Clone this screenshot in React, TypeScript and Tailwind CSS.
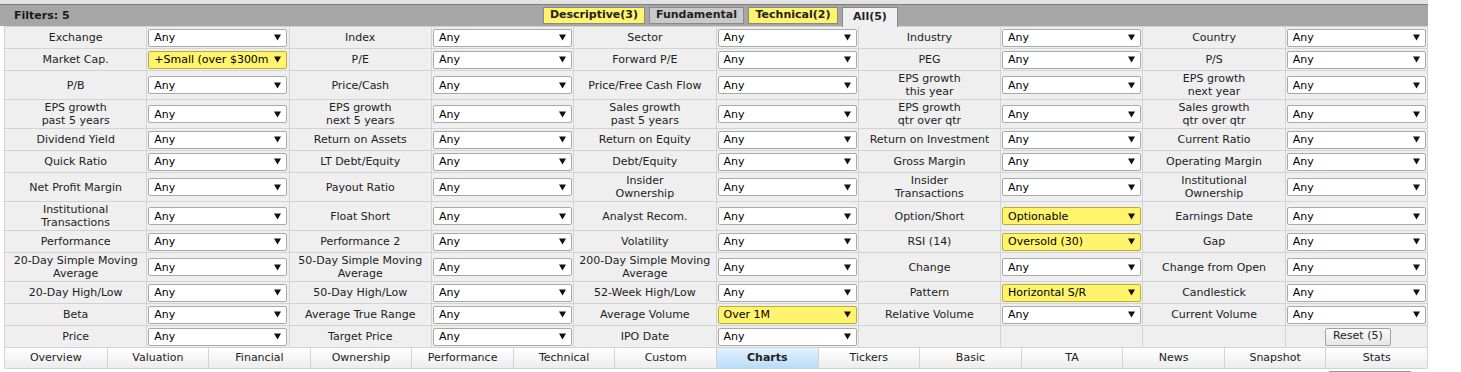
import React from 'react';

type Filter = { label: string[]; value?: string; hot?: boolean };

const rows: Filter[][] = [
  [{ label: ['Exchange'] }, { label: ['Index'] }, { label: ['Sector'] }, { label: ['Industry'] }, { label: ['Country'] }],
  [
    { label: ['Market Cap.'], value: '+Small (over $300m', hot: true },
    { label: ['P/E'] },
    { label: ['Forward P/E'] },
    { label: ['PEG'] },
    { label: ['P/S'] },
  ],
  [
    { label: ['P/B'] },
    { label: ['Price/Cash'] },
    { label: ['Price/Free Cash Flow'] },
    { label: ['EPS growth', 'this year'] },
    { label: ['EPS growth', 'next year'] },
  ],
  [
    { label: ['EPS growth', 'past 5 years'] },
    { label: ['EPS growth', 'next 5 years'] },
    { label: ['Sales growth', 'past 5 years'] },
    { label: ['EPS growth', 'qtr over qtr'] },
    { label: ['Sales growth', 'qtr over qtr'] },
  ],
  [
    { label: ['Dividend Yield'] },
    { label: ['Return on Assets'] },
    { label: ['Return on Equity'] },
    { label: ['Return on Investment'] },
    { label: ['Current Ratio'] },
  ],
  [
    { label: ['Quick Ratio'] },
    { label: ['LT Debt/Equity'] },
    { label: ['Debt/Equity'] },
    { label: ['Gross Margin'] },
    { label: ['Operating Margin'] },
  ],
  [
    { label: ['Net Profit Margin'] },
    { label: ['Payout Ratio'] },
    { label: ['Insider', 'Ownership'] },
    { label: ['Insider', 'Transactions'] },
    { label: ['Institutional', 'Ownership'] },
  ],
  [
    { label: ['Institutional', 'Transactions'] },
    { label: ['Float Short'] },
    { label: ['Analyst Recom.'] },
    { label: ['Option/Short'], value: 'Optionable', hot: true },
    { label: ['Earnings Date'] },
  ],
  [
    { label: ['Performance'] },
    { label: ['Performance 2'] },
    { label: ['Volatility'] },
    { label: ['RSI (14)'], value: 'Oversold (30)', hot: true },
    { label: ['Gap'] },
  ],
  [
    { label: ['20-Day Simple Moving', 'Average'] },
    { label: ['50-Day Simple Moving', 'Average'] },
    { label: ['200-Day Simple Moving', 'Average'] },
    { label: ['Change'] },
    { label: ['Change from Open'] },
  ],
  [
    { label: ['20-Day High/Low'] },
    { label: ['50-Day High/Low'] },
    { label: ['52-Week High/Low'] },
    { label: ['Pattern'], value: 'Horizontal S/R', hot: true },
    { label: ['Candlestick'] },
  ],
  [
    { label: ['Beta'] },
    { label: ['Average True Range'] },
    { label: ['Average Volume'], value: 'Over 1M', hot: true },
    { label: ['Relative Volume'] },
    { label: ['Current Volume'] },
  ],
];

const lastRow: Filter[] = [{ label: ['Price'] }, { label: ['Target Price'] }, { label: ['IPO Date'] }];

const views = [
  'Overview', 'Valuation', 'Financial', 'Ownership', 'Performance', 'Technical', 'Custom',
  'Charts', 'Tickers', 'Basic', 'TA', 'News', 'Snapshot', 'Stats',
];

const Arrow = () => (
  <svg width="7" height="7" viewBox="0 0 7 7" className="shrink-0">
    <path d="M0 0.5 H7 L3.5 6.5 Z" fill="#111" />
  </svg>
);

// Fake <select> box, drawn like the native one
const SelectBox = ({ value = 'Any', hot }: { value?: string; hot?: boolean }) => (
  <div
    className={`ml-px flex h-[18px] w-[139px] items-center justify-between rounded-[2px] border pl-[5px] pr-[5px] leading-[16px] ${
      hot ? 'border-[#b8ad3c] bg-[#fff46b]' : 'border-[#a9a9a9] bg-white'
    }`}
  >
    <span className="whitespace-nowrap pt-px text-black">{value}</span>
    <Arrow />
  </div>
);

const LabelCell = ({ lines }: { lines: string[] }) => (
  <div className="flex items-center justify-center bg-[#efefef] px-1 py-px text-center leading-[13px] text-[#222]">
    <span>
      {lines.map((l, i) => (
        <React.Fragment key={i}>
          {i > 0 && <br />}
          {l}
        </React.Fragment>
      ))}
    </span>
  </div>
);

const TopTab = ({ text, tone, w }: { text: string; tone: 'yellow' | 'gray' | 'active'; w: string }) => {
  const cls =
    tone === 'yellow'
      ? 'bg-[#fff46b] h-[17px] mt-[2px]'
      : tone === 'gray'
      ? 'bg-[#c9c9c9] h-[17px] mt-[2px]'
      : 'bg-[#efefef] border-b-0 h-[20px] mt-[2px]';
  return (
    <div className={`flex items-center justify-center border border-[#8a8a8a] font-bold text-[#222] ${w} ${cls}`}>
      {text}
    </div>
  );
};

export default function App() {
  return (
    <div className="w-[1428px] bg-white text-[11px] font-['DejaVu_Sans',Verdana,sans-serif]">
      {/* header strip */}
      <div className="h-[4px] bg-[#e2e2e2]" />
      <div className="grid h-[22px] grid-cols-[543px_auto_1fr] border-t border-[#7d7d7d] bg-[#a6a6a6]">
        <div className="flex items-center pl-[14px] font-bold text-[#1a1a1a]">Filters: 5</div>
        <div className="flex items-start gap-[4px]">
          <TopTab text="Descriptive(3)" tone="yellow" w="w-[102px]" />
          <TopTab text="Fundamental" tone="gray" w="w-[95px]" />
          <TopTab text="Technical(2)" tone="yellow" w="w-[90px]" />
          <TopTab text="All(5)" tone="active" w="w-[56px]" />
        </div>
        <div />
      </div>

      <div className="ml-[4px] w-[1424px]">
        {/* filter grid */}
        <div className="grid grid-cols-10 gap-px border border-b-0 border-[#d3d3d3] bg-[#d3d3d3]">
          {rows.map((row, r) =>
            row.map((f, c) => (
              <React.Fragment key={`${r}-${c}`}>
                <LabelCell lines={f.label} />
                <div className="flex min-h-[21px] items-center bg-[#efefef]">
                  <SelectBox value={f.value} hot={f.hot} />
                </div>
              </React.Fragment>
            ))
          )}
          {lastRow.map((f, c) => (
            <React.Fragment key={`last-${c}`}>
              <LabelCell lines={f.label} />
              <div className="flex min-h-[21px] items-center bg-[#efefef]">
                <SelectBox />
              </div>
            </React.Fragment>
          ))}
          <div className="bg-[#efefef]" />
          <div className="bg-[#efefef]" />
          <div className="bg-[#efefef]" />
          <div className="flex items-center justify-center bg-[#efefef]">
            <div className="ml-[3px] flex h-[18px] items-center rounded-[2px] border border-[#a3a3a3] bg-gradient-to-b from-[#fbfbfb] to-[#e6e6e6] px-[7px] text-[#222]">
              Reset (5)
            </div>
          </div>
        </div>

        {/* view tabs */}
        <div className="grid grid-cols-[repeat(14,minmax(0,1fr))] border border-[#d3d3d3]">
          {views.map((v, i) => (
            <div
              key={v}
              className={`flex h-[20px] items-center justify-center text-[#222] ${
                i > 0 ? 'border-l border-[#d3d3d3]' : ''
              } ${
                v === 'Charts'
                  ? 'bg-gradient-to-b from-[#e2f1fe] to-[#b9dcfa] font-bold'
                  : 'bg-gradient-to-b from-[#ffffff] to-[#ededed]'
              }`}
            >
              {v}
            </div>
          ))}
        </div>
      </div>
      <div className="ml-[1329px] mt-[2px] h-px w-[82px] bg-[#9a9a9a]" />
    </div>
  );
}
